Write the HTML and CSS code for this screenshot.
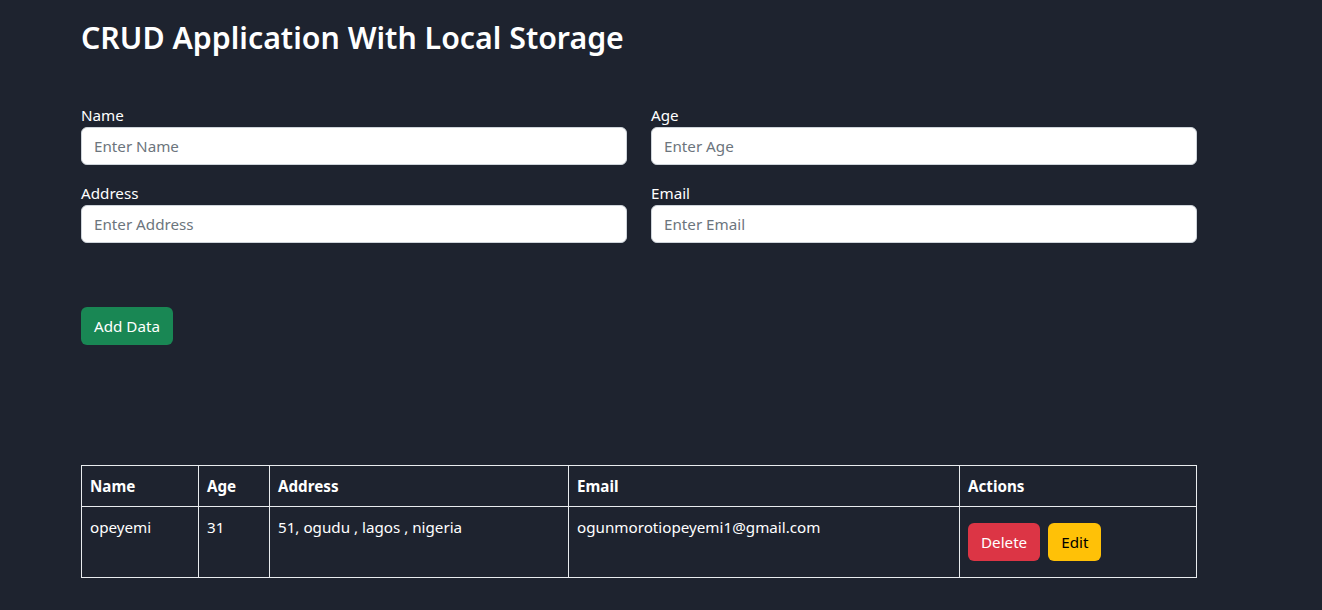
FILE: index.html
```html
<!DOCTYPE html>
<html lang="en">
<head>
<meta charset="utf-8">
<title>CRUD Application With Local Storage</title>
<link rel="stylesheet" href="styles.css">
</head>
<body>
<div class="container">
  <h1 class="title">CRUD Application With Local Storage</h1>
  <form class="form">
    <div class="grid">
      <div class="field">
        <label class="label" for="name">Name</label>
        <input class="input" id="name" type="text" placeholder="Enter Name">
      </div>
      <div class="field">
        <label class="label" for="age">Age</label>
        <input class="input" id="age" type="text" placeholder="Enter Age">
      </div>
      <div class="field">
        <label class="label" for="address">Address</label>
        <input class="input" id="address" type="text" placeholder="Enter Address">
      </div>
      <div class="field">
        <label class="label" for="email">Email</label>
        <input class="input" id="email" type="text" placeholder="Enter Email">
      </div>
    </div>
    <button type="button" class="btn btn-green">Add Data</button>
  </form>
  <table class="table">
    <colgroup>
      <col class="c-name"><col class="c-age"><col class="c-address"><col class="c-email"><col class="c-actions">
    </colgroup>
    <thead>
      <tr><th>Name</th><th>Age</th><th>Address</th><th>Email</th><th>Actions</th></tr>
    </thead>
    <tbody>
      <tr>
        <td>opeyemi</td>
        <td>31</td>
        <td>51, ogudu , lagos , nigeria</td>
        <td>ogunmorotiopeyemi1@gmail.com</td>
        <td><div class="actions"><button type="button" class="btn btn-red">Delete</button><button type="button" class="btn btn-yellow">Edit</button></div></td>
      </tr>
    </tbody>
  </table>
</div>
</body>
</html>
```
FILE: styles.css
```css
* { box-sizing: border-box; }
html, body { margin: 0; padding: 0; }
body {
  background: #1e232f;
  color: #ffffff;
  font-family: "Noto Sans", "Open Sans", sans-serif;
  font-size: 15.2px;
  line-height: 1.5;
}
.container {
  width: 1116px;
  margin-left: 81px;
  padding-top: 19px;
}
.title {
  margin: 0;
  font-size: 30.3px;
  font-weight: 600;
  line-height: 38px;
}
.form { margin-top: 46px; }
.grid {
  display: grid;
  grid-template-columns: 1fr 1fr;
  column-gap: 24px;
  row-gap: 16px;
}
.field { display: flex; flex-direction: column; }
.label { display: block; line-height: 24px; font-size: 15.2px; }
.input {
  height: 38px;
  padding: 6px 12px;
  font-family: inherit;
  font-size: 15.2px;
  color: #212529;
  background: #fff;
  border: 1px solid #ced4da;
  border-radius: 6px;
  outline: none;
}
.input::placeholder { color: #6c757d; }
.btn {
  height: 38px;
  padding: 0 12px;
  font-family: inherit;
  font-size: 15.2px;
  line-height: 36px;
  border: 1px solid transparent;
  border-radius: 6px;
  cursor: pointer;
}
.form .btn { margin-top: 64px; }
.btn-green { background: #198754; color: #fff; }
.btn-red { background: #dc3545; color: #fff; }
.btn-yellow { background: #ffc107; color: #000; }
.table {
  margin-top: 120px;
  width: 1115px;
  border-collapse: collapse;
  table-layout: fixed;
}
.c-name { width: 117px; }
.c-age { width: 71px; }
.c-address { width: 299px; }
.c-email { width: 391px; }
.c-actions { width: 237px; }
.table th, .table td {
  border: 1px solid #e9ecef;
  padding: 8px;
  text-align: left;
  vertical-align: top;
  font-size: 15.2px;
  line-height: 24px;
}
.table th { font-weight: 700; }
.actions { display: flex; gap: 8px; margin: 8px 0; }
```
